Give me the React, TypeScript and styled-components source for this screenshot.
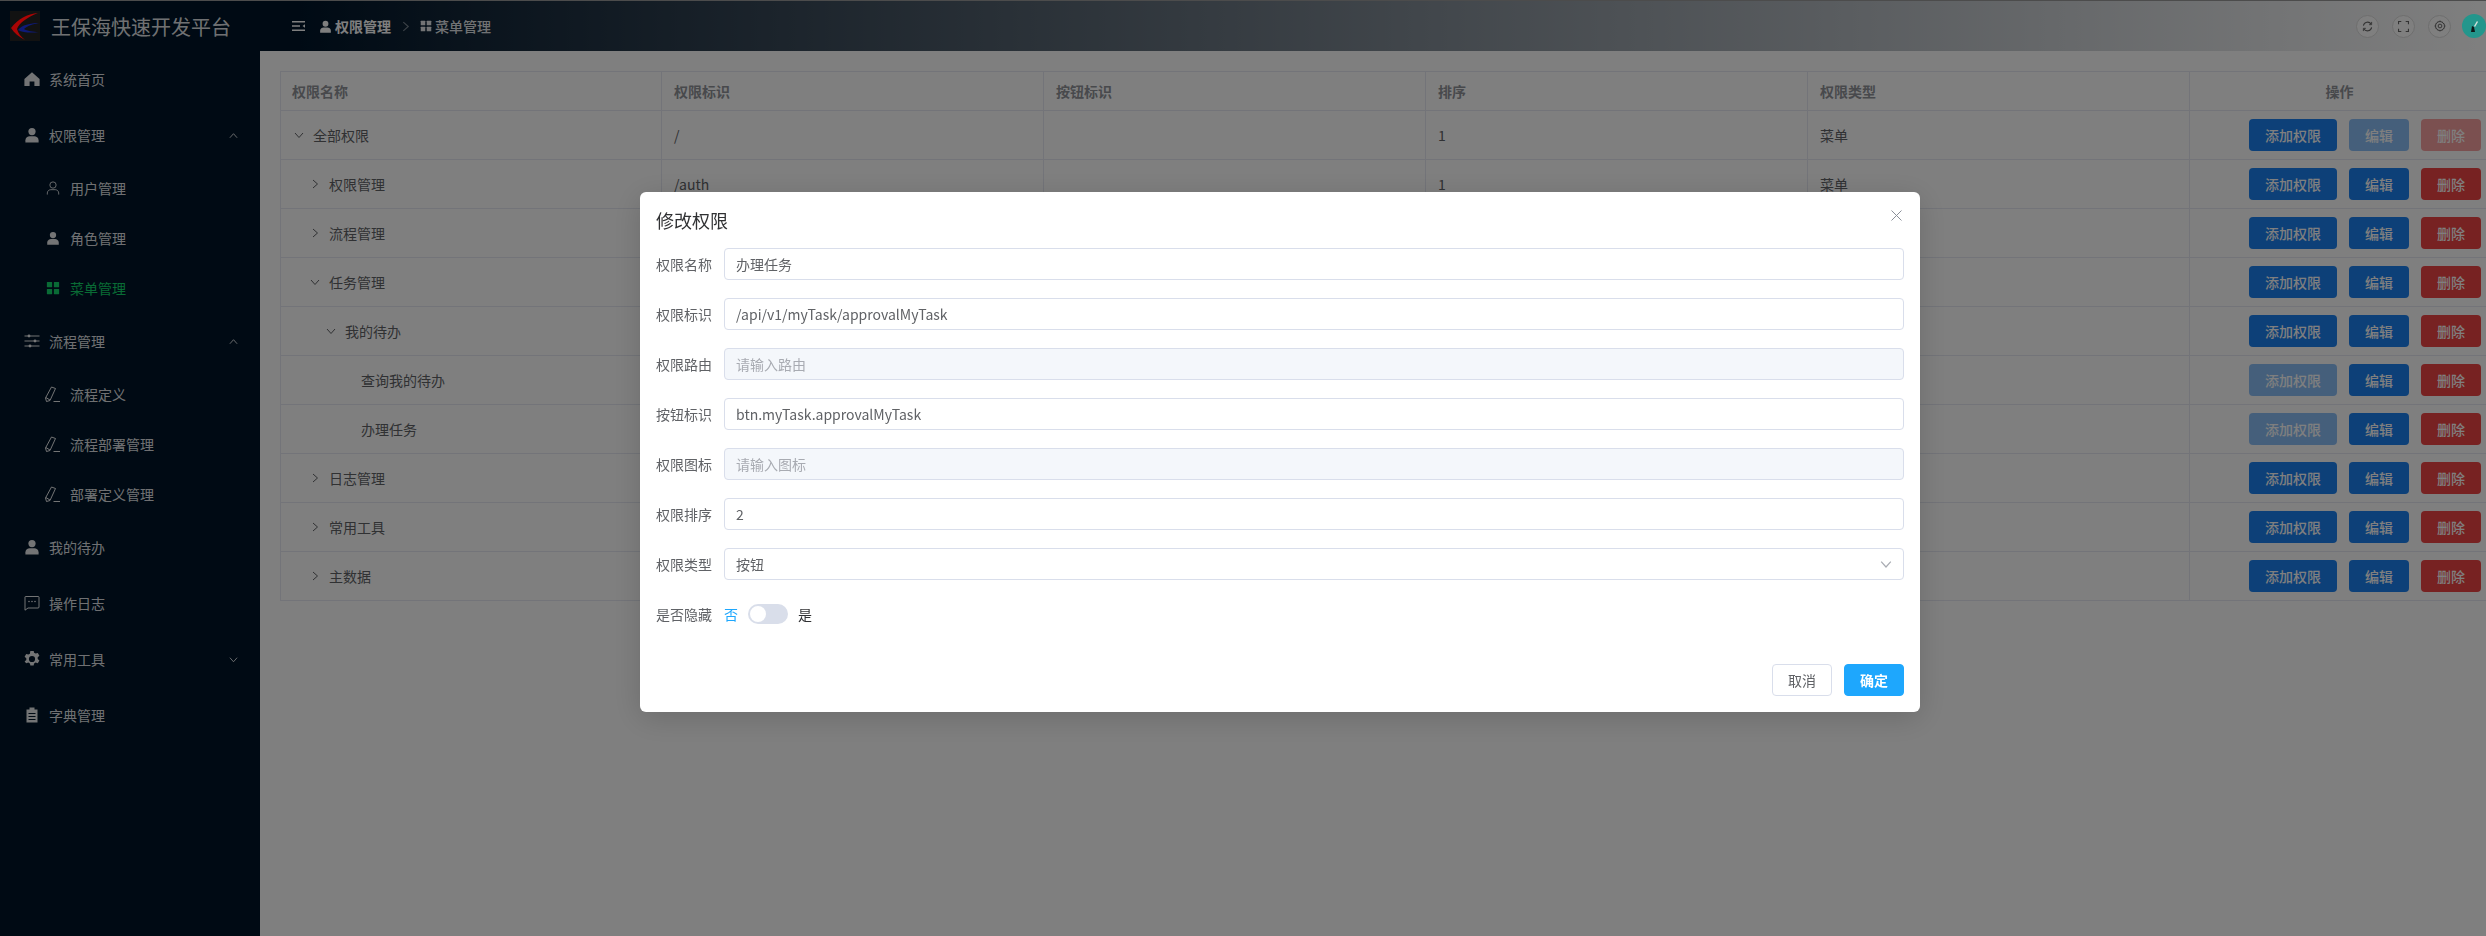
import styled, { createGlobalStyle } from 'styled-components';
import { ReactNode } from 'react';

const GlobalStyle = createGlobalStyle`
    html, body {
        margin: 0;
        padding: 0;
        height: 936px;
        overflow: hidden;
        background: #fff;
    }
    body {
        font-family: "Noto Sans CJK SC", "Noto Sans", sans-serif;
        font-size: 14px;
    }
    * {
        box-sizing: border-box;
    }
`;

// ---- icons ----
type IconProps = { size?: number };

const Svg = ({ size = 16, children }: IconProps & { children: ReactNode }) => (
    <svg width={size} height={size} viewBox="0 0 16 16" fill="currentColor">
        {children}
    </svg>
);

const HomeIcon = (p: IconProps) => (
    <Svg {...p}>
        <path d="M8 1.2 15.6 8v7H10.4v-4.4H5.6V15H.4V8z" />
    </Svg>
);
const UserFilled = (p: IconProps) => (
    <Svg {...p}>
        <circle cx="8" cy="4.6" r="3.6" />
        <path d="M1.4 15.6v-2.4c0-2.6 2.4-4 4.2-4h4.8c1.8 0 4.2 1.4 4.2 4v2.4z" />
    </Svg>
);
const UserOutline = (p: IconProps) => (
    <Svg {...p}>
        <g fill="none" stroke="currentColor" strokeWidth="1">
            <circle cx="8" cy="4.6" r="3.6" />
            <path d="M1.5 15.5v-1.800c0-2.400 2.200-3.800 4-3.800h5c1.800 0 4 1.400 4 3.800v1.800" />
        </g>
    </Svg>
);
const GridIcon = (p: IconProps) => (
    <Svg {...p}>
        <rect x="1" y="1" width="6" height="6" rx=".5" />
        <rect x="9" y="1" width="6" height="6" rx=".5" />
        <rect x="1" y="9" width="6" height="6" rx=".5" />
        <rect x="9" y="9" width="6" height="6" rx=".5" />
    </Svg>
);
const SlidersIcon = (p: IconProps) => (
    <Svg {...p}>
        <path d="M.5 2.500h15v1H.5zM.5 7.500h15v1H.5zM.5 12.500h15v1H.5z" />
        <circle cx="5" cy="3" r="1.400" />
        <circle cx="11" cy="8" r="1.400" />
        <circle cx="6" cy="13" r="1.400" />
    </Svg>
);
const PenIcon = (p: IconProps) => (
    <Svg {...p}>
        <g fill="none" stroke="currentColor" strokeWidth="1">
            <path d="M6.500 1 10.500 2.500 5 14.500 1.500 15.500.5 12zM.8 11.500 5 14" />
            <path d="M8.500 15.500h6.500" />
        </g>
    </Svg>
);
const ChatIcon = (p: IconProps) => (
    <Svg {...p}>
        <path
            fill="none"
            stroke="currentColor"
            d="M1.500 1.500h13a1 1 0 0 1 .5.500v10a1 1 0 0 1-1 1H4L1 15.200V2a.6.6 0 0 1 .5-.5z"
        />
        <circle cx="5" cy="6.500" r=".8" />
        <circle cx="8" cy="6.500" r=".8" />
        <circle cx="11" cy="6.500" r=".8" />
    </Svg>
);
const GearIcon = (p: IconProps) => (
    <Svg {...p}>
        <path
            d="M6.400 0h3.200l.5 2.200 1.500.9 2.200-.7 1.600 2.800-1.700 1.500v1.700l1.700 1.500-1.600 2.800-2.200-.7-1.500.9-.5 2.200H6.400l-.5-2.200-1.500-.9-2.200.7L.6 10.900l1.700-1.500V7.700L.6 6.200l1.600-2.800 2.200.7 1.500-.9zM8 5.400a3.100 3.100 0 1 0 0 6.200 3.100 3.100 0 0 0 0-6.200z"
            fillRule="evenodd"
            transform="translate(0 -.5)"
        />
    </Svg>
);
const ClipboardIcon = (p: IconProps) => (
    <Svg {...p}>
        <path
            fillRule="evenodd"
            d="M5.500.500h5v2h3v13h-11v-13h3zM4.500 6v1h7V6zm0 3v1h7V9zm0 3v1h7v-1z"
        />
    </Svg>
);
const Chevron = ({ dir, size = 10 }: { dir: 'up' | 'down' | 'right'; size?: number }) => {
    const d = {
        up: 'M1 7.500 5 3l4 4.500',
        down: 'M1 3l4 4.500L9 3',
        right: 'M3 1l4.500 4L3 9',
    }[dir];
    return (
        <svg width={size} height={size} viewBox="0 0 10 10" fill="none" stroke="currentColor" strokeWidth="1">
            <path d={d} />
        </svg>
    );
};
const MenuFoldIcon = () => (
    <svg width="13" height="12" viewBox="0 0 13 12" fill="currentColor">
        <path d="M0 1h13v1.500H0zM0 5.200h8v1.500H0zM0 9.500h13V11H0z" />
        <path d="M13 4.200v3.600L10.500 6z" />
    </svg>
);
const RefreshIcon = () => (
    <svg width="11" height="11" viewBox="0 0 12 12" fill="none" stroke="currentColor" strokeWidth="1.200">
        <path d="M1.500 5A4.600 4.600 0 0 1 10 3.500M10.500 7A4.600 4.600 0 0 1 2 8.500" />
        <path d="M10.500 1v3H7.800M1.500 11V8h2.700" strokeWidth="1" />
    </svg>
);
const FullscreenIcon = () => (
    <svg width="11" height="11" viewBox="0 0 12 12" fill="none" stroke="currentColor" strokeWidth="1.200">
        <path d="M.6 3.500V.6h3M8.400.6h3v2.900M11.400 8.500v2.900h-3M3.600 11.400h-3V8.500" />
    </svg>
);
const SettingIcon = () => (
    <svg width="12" height="12" viewBox="0 0 16 16" fill="none" stroke="currentColor" strokeWidth="1.300">
        <path d="M8 1l1 1.700 2-.2.900 1.800 1.800.9-.2 2L15 8l-1.500 1 .2 2-1.800.9-.9 1.800-2-.2L8 15l-1-1.500-2 .2-.9-1.800-1.800-.9.2-2L1 8l1.500-1-.2-2 1.800-.9.900-1.800 2 .2z" />
        <circle cx="8" cy="8" r="2.500" />
    </svg>
);
const CloseIcon = () => (
    <svg width="11" height="11" viewBox="0 0 11 11" fill="none" stroke="#8a8f99" strokeWidth="1">
        <path d="M.5.500l10 10M10.500.500l-10 10" />
    </svg>
);
const Logo = () => (
    <svg width="30" height="30" viewBox="0 0 30 30">
        <rect width="30" height="30" fill="#121212" />
        <path d="M28 2C17 3 8 8 1 17c3 5 8 9 14 12-4-3-7-7-8-11C9 12 18 6 28 2z" fill="#ab0505" />
        <path d="M29 12C20 12 12 14 8 19c5 3 14 3 21 2-6 0-12-1-15-3 3-3 9-5 15-6z" fill="#0e1a78" />
    </svg>
);

// ---- data ----
type MenuEntry = {
    label: string;
    icon: ReactNode;
    arrow?: 'up' | 'down';
    sub?: boolean;
    active?: boolean;
};

const menu: MenuEntry[] = [
    { label: '系统首页', icon: <HomeIcon /> },
    { label: '权限管理', icon: <UserFilled />, arrow: 'up' },
    { label: '用户管理', icon: <UserOutline size={14} />, sub: true },
    { label: '角色管理', icon: <UserFilled size={14} />, sub: true },
    { label: '菜单管理', icon: <GridIcon size={14} />, sub: true, active: true },
    { label: '流程管理', icon: <SlidersIcon />, arrow: 'up' },
    { label: '流程定义', icon: <PenIcon />, sub: true },
    { label: '流程部署管理', icon: <PenIcon />, sub: true },
    { label: '部署定义管理', icon: <PenIcon />, sub: true },
    { label: '我的待办', icon: <UserFilled /> },
    { label: '操作日志', icon: <ChatIcon /> },
    { label: '常用工具', icon: <GearIcon />, arrow: 'down' },
    { label: '字典管理', icon: <ClipboardIcon /> },
];

// the dialog covers the other columns from the third row on
type Row = {
    name: string;
    level: number;
    arrow?: 'down' | 'right';
    code?: string;
    sort?: number;
    type?: string;
    addDisabled?: boolean;
    restDisabled?: boolean;
};

const rows: Row[] = [
    { name: '全部权限', level: 0, arrow: 'down', code: '/', sort: 1, type: '菜单', restDisabled: true },
    { name: '权限管理', level: 1, arrow: 'right', code: '/auth', sort: 1, type: '菜单' },
    { name: '流程管理', level: 1, arrow: 'right' },
    { name: '任务管理', level: 1, arrow: 'down' },
    { name: '我的待办', level: 2, arrow: 'down' },
    { name: '查询我的待办', level: 3, addDisabled: true },
    { name: '办理任务', level: 3, addDisabled: true },
    { name: '日志管理', level: 1, arrow: 'right' },
    { name: '常用工具', level: 1, arrow: 'right' },
    { name: '主数据', level: 1, arrow: 'right' },
];

const columns = ['权限名称', '权限标识', '按钮标识', '排序', '权限类型'];

type Field = { label: string; value?: string; placeholder?: string; disabled?: boolean; select?: boolean };

const fields: Field[] = [
    { label: '权限名称', value: '办理任务' },
    { label: '权限标识', value: '/api/v1/myTask/approvalMyTask' },
    { label: '权限路由', placeholder: '请输入路由', disabled: true },
    { label: '按钮标识', value: 'btn.myTask.approvalMyTask' },
    { label: '权限图标', placeholder: '请输入图标', disabled: true },
    { label: '权限排序', value: '2' },
    { label: '权限类型', value: '按钮', select: true },
];

// ---- page ----
const App = () => {
    return (
        <Page>
            <GlobalStyle />
            <Header>
                <Brand>
                    <LogoBox>
                        <Logo />
                    </LogoBox>
                    <BrandTitle>王保海快速开发平台</BrandTitle>
                </Brand>
                <Crumbs>
                    <FoldButton>
                        <MenuFoldIcon />
                    </FoldButton>
                    <Crumb $strong>
                        <UserFilled size={13} />
                        权限管理
                    </Crumb>
                    <CrumbSep>
                        <Chevron dir="right" size={11} />
                    </CrumbSep>
                    <Crumb>
                        <GridIcon size={12} />
                        菜单管理
                    </Crumb>
                </Crumbs>
                <HeaderTools>
                    <ToolButton>
                        <RefreshIcon />
                    </ToolButton>
                    <ToolButton>
                        <FullscreenIcon />
                    </ToolButton>
                    <ToolButton>
                        <SettingIcon />
                    </ToolButton>
                    <Avatar>
                        <svg width="24" height="24" viewBox="0 0 24 24">
                            <path d="M9 18l1-6 2 1 1 5z" fill="#101818" />
                            <path d="M12 12l3-5 1 1-3 5z" fill="#cfe0da" />
                        </svg>
                    </Avatar>
                </HeaderTools>
            </Header>
            <Body>
                <Sidebar>
                    {menu.map((item) => (
                        <MenuItem key={item.label} $sub={item.sub} $active={item.active}>
                            <MenuIcon>{item.icon}</MenuIcon>
                            <MenuLabel>{item.label}</MenuLabel>
                            {item.arrow && (
                                <MenuArrow>
                                    <Chevron dir={item.arrow} size={9} />
                                </MenuArrow>
                            )}
                        </MenuItem>
                    ))}
                </Sidebar>
                <Main>
                    <Table>
                        <colgroup>
                            <col width="381" />
                            <col width="382" />
                            <col width="382" />
                            <col width="382" />
                            <col width="382" />
                            <col width="300" />
                        </colgroup>
                        <thead>
                            <tr>
                                {columns.map((c) => (
                                    <Th key={c}>{c}</Th>
                                ))}
                                <Th $center>操作</Th>
                            </tr>
                        </thead>
                        <tbody>
                            {rows.map((row) => (
                                <tr key={row.name + row.level}>
                                    <Td>
                                        <TreeCell $level={row.level}>
                                            <TreeArrow>
                                                {row.arrow && <Chevron dir={row.arrow} size={10} />}
                                            </TreeArrow>
                                            {row.name}
                                        </TreeCell>
                                    </Td>
                                    <Td>{row.code}</Td>
                                    <Td />
                                    <Td>{row.sort}</Td>
                                    <Td>{row.type}</Td>
                                    <Td>
                                        <Actions>
                                            <ActionButton $w={88} disabled={row.addDisabled}>
                                                添加权限
                                            </ActionButton>
                                            <ActionButton $w={60} disabled={row.restDisabled}>
                                                编辑
                                            </ActionButton>
                                            <ActionButton $w={60} $danger disabled={row.restDisabled}>
                                                删除
                                            </ActionButton>
                                        </Actions>
                                    </Td>
                                </tr>
                            ))}
                        </tbody>
                    </Table>
                </Main>
            </Body>
            <Overlay>
                <Modal>
                    <ModalHead>
                        <ModalTitle>修改权限</ModalTitle>
                        <CloseButton>
                            <CloseIcon />
                        </CloseButton>
                    </ModalHead>
                    <Form>
                        {fields.map((f) => (
                            <FormRow key={f.label}>
                                <FormLabel>{f.label}</FormLabel>
                                <InputBox $disabled={f.disabled}>
                                    {f.value ?? <Placeholder>{f.placeholder}</Placeholder>}
                                    {f.select && (
                                        <SelectArrow>
                                            <Chevron dir="down" size={12} />
                                        </SelectArrow>
                                    )}
                                </InputBox>
                            </FormRow>
                        ))}
                        <SwitchRow>
                            <FormLabel>是否隐藏</FormLabel>
                            <SwitchText $on>否</SwitchText>
                            <SwitchTrack>
                                <SwitchKnob />
                            </SwitchTrack>
                            <SwitchText>是</SwitchText>
                        </SwitchRow>
                    </Form>
                    <ModalFooter>
                        <FooterButton>取消</FooterButton>
                        <FooterButton $primary>确定</FooterButton>
                    </ModalFooter>
                </Modal>
            </Overlay>
        </Page>
    );
};

const Page = styled.div`
    width: 2486px;
    height: 936px;
    overflow: hidden;
    display: flex;
    flex-direction: column;
    background: #fff;
`;

const Header = styled.header`
    height: 51px;
    flex: none;
    display: flex;
    align-items: center;
    border-top: 1px solid #999;
    background: linear-gradient(90deg, #001529 0, #001529 300px, #fff 100%);
    color: #fff;
`;

const Brand = styled.div`
    width: 260px;
    flex: none;
    height: 100%;
    display: flex;
    align-items: center;
    gap: 11px;
    padding-left: 10px;
    background: #001529;
`;

// logo and avatar keep their full colour in the screenshot, so they sit above the mask
const LogoBox = styled.span`
    position: relative;
    z-index: 1;
    display: flex;
`;

const BrandTitle = styled.span`
    font-size: 20px;
    color: rgba(255, 255, 255, 0.9);
    white-space: nowrap;
`;

const Crumbs = styled.div`
    display: flex;
    align-items: center;
    padding-left: 32px;
    color: rgba(255, 255, 255, 0.85);
`;

const FoldButton = styled.span`
    display: flex;
    margin-right: 14px;
    color: #fff;
`;

const Crumb = styled.span<{ $strong?: boolean }>`
    display: flex;
    align-items: center;
    gap: 3px;
    font-weight: ${(p) => (p.$strong ? 700 : 500)};
    color: ${(p) => (p.$strong ? '#fff' : 'rgba(255, 255, 255, 0.9)')};
    white-space: nowrap;
`;

const CrumbSep = styled.span`
    display: flex;
    margin: 0 9px;
    color: rgba(255, 255, 255, 0.45);
`;

const HeaderTools = styled.div`
    margin-left: auto;
    display: flex;
    align-items: center;
    gap: 13px;
`;

const ToolButton = styled.span`
    width: 23px;
    height: 23px;
    border-radius: 50%;
    display: flex;
    align-items: center;
    justify-content: center;
    background: #fff;
    border: 1px solid #dcdcdc;
    color: #666;
`;

const Avatar = styled.span`
    position: relative;
    z-index: 1;
    width: 24px;
    height: 24px;
    margin-left: -2px;
    border-radius: 50%;
    overflow: hidden;
    display: flex;
    background: #23968c;
`;

const Body = styled.div`
    flex: 1;
    display: flex;
    min-height: 0;
`;

const Sidebar = styled.aside`
    width: 260px;
    flex: none;
    background: #001529;
`;

const MenuItem = styled.div<{ $sub?: boolean; $active?: boolean }>`
    display: flex;
    align-items: center;
    height: ${(p) => (p.$sub ? 50 : 56)}px;
    padding-left: ${(p) => (p.$sub ? 45 : 24)}px;
    padding-right: 22px;
    color: ${(p) => (p.$active ? '#12d66a' : 'rgba(255, 255, 255, 0.9)')};
`;

const MenuIcon = styled.span`
    width: 16px;
    margin-right: 9px;
    display: flex;
    justify-content: center;
    flex: none;
`;

const MenuLabel = styled.span`
    white-space: nowrap;
`;

const MenuArrow = styled.span`
    margin-left: auto;
    display: flex;
`;

const Main = styled.main`
    flex: 1;
    min-width: 0;
    overflow: hidden;
    padding: 20px 0 0 20px;
`;

const Table = styled.table`
    table-layout: fixed;
    width: 2209px;
    border-collapse: collapse;
    color: #606266;
    border-top: 1px solid #e6e9f2;
    border-left: 1px solid #e6e9f2;
`;

const Th = styled.th<{ $center?: boolean }>`
    height: 39px;
    padding: 0 12px;
    font-weight: 700;
    font-size: 14px;
    color: #909399;
    text-align: ${(p) => (p.$center ? 'center' : 'left')};
    border-right: 1px solid #e6e9f2;
    border-bottom: 1px solid #e6e9f2;
    &:first-child {
        padding-left: 11px;
    }
`;

const Td = styled.td`
    height: 49px;
    padding: 0 12px;
    font-size: 14px;
    border-right: 1px solid #e6e9f2;
    border-bottom: 1px solid #e6e9f2;
`;

const TreeCell = styled.div<{ $level: number }>`
    display: flex;
    align-items: center;
    padding-left: ${(p) => p.$level * 16}px;
`;

const TreeArrow = styled.span`
    width: 20px;
    flex: none;
    display: flex;
    padding-left: 1px;
`;

const Actions = styled.div`
    display: flex;
    gap: 12px;
    margin-left: 47px;
`;

const ActionButton = styled.button<{ $w: number; $danger?: boolean }>`
    width: ${(p) => p.$w}px;
    height: 32px;
    flex: none;
    padding: 0;
    border: none;
    border-radius: 4px;
    font: inherit;
    font-weight: 500;
    color: #fff;
    background: ${(p) => (p.$danger ? '#ef4444' : '#1a80f0')};
    &:disabled {
        opacity: 0.5;
    }
`;

const Overlay = styled.div`
    position: fixed;
    inset: 0;
    background: rgba(0, 0, 0, 0.5);
`;

const Modal = styled.div`
    position: absolute;
    left: 640px;
    top: 192px;
    width: 1280px;
    height: 520px;
    display: flex;
    flex-direction: column;
    background: #fff;
    border-radius: 6px;
    box-shadow: 0 6px 30px rgba(0, 0, 0, 0.16);
    padding: 0 16px 16px;
`;

const ModalHead = styled.div`
    height: 56px;
    display: flex;
    align-items: center;
    justify-content: space-between;
    flex: none;
`;

const ModalTitle = styled.span`
    font-size: 18px;
    color: #303133;
`;

const CloseButton = styled.span`
    display: flex;
    margin-right: 2px;
    margin-top: -10px;
`;

const Form = styled.div`
    display: flex;
    flex-direction: column;
    gap: 18px;
    flex: 1;
`;

const FormRow = styled.div`
    display: flex;
    align-items: center;
    height: 32px;
`;

const FormLabel = styled.label`
    width: 68px;
    flex: none;
    color: #606266;
    white-space: nowrap;
`;

const InputBox = styled.div<{ $disabled?: boolean }>`
    flex: 1;
    height: 32px;
    display: flex;
    align-items: center;
    padding: 0 11px;
    border: 1px solid #d9deeb;
    border-radius: 4px;
    color: #606266;
    background: ${(p) => (p.$disabled ? '#f4f7fb' : '#fff')};
`;

const Placeholder = styled.span`
    color: #a8abb2;
`;

const SelectArrow = styled.span`
    margin-left: auto;
    display: flex;
    color: #a8abb2;
`;

const SwitchRow = styled.div`
    display: flex;
    align-items: center;
    height: 32px;
`;

const SwitchText = styled.span<{ $on?: boolean }>`
    color: ${(p) => (p.$on ? '#1ea7fd' : '#303133')};
`;

const SwitchTrack = styled.span`
    width: 40px;
    height: 20px;
    margin: 0 10px;
    padding: 2px;
    border-radius: 10px;
    background: #d9deea;
    display: flex;
`;

const SwitchKnob = styled.span`
    width: 16px;
    height: 16px;
    border-radius: 50%;
    background: #fff;
`;

const ModalFooter = styled.div`
    flex: none;
    display: flex;
    justify-content: flex-end;
    gap: 12px;
`;

const FooterButton = styled.button<{ $primary?: boolean }>`
    width: 60px;
    height: 32px;
    padding: 0;
    border-radius: 4px;
    font: inherit;
    font-weight: ${(p) => (p.$primary ? 700 : 400)};
    color: ${(p) => (p.$primary ? '#fff' : '#606266')};
    background: ${(p) => (p.$primary ? '#1ea7fd' : '#fff')};
    border: 1px solid ${(p) => (p.$primary ? '#1ea7fd' : '#d9deeb')};
`;

export default App;
